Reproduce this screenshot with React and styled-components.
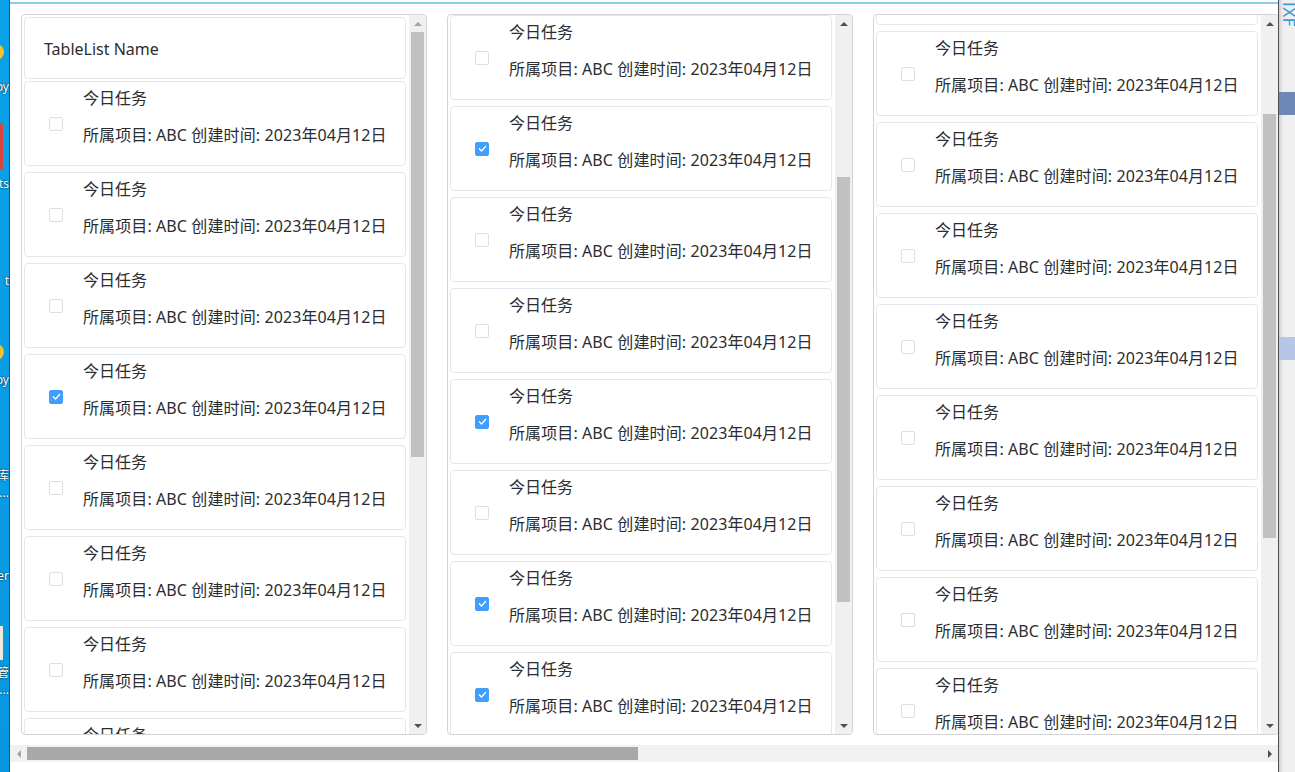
import React from "react";
import styled, { createGlobalStyle } from "styled-components";

const GlobalStyle = createGlobalStyle`
  html, body {
    margin: 0;
    padding: 0;
  }
  body {
    width: 1295px;
    height: 772px;
    overflow: hidden;
    background: #fff;
    font-family: "Noto Sans", "Noto Sans CJK SC", sans-serif;
    color: #2b2d30;
  }
`;

const Screen = styled.div`
  display: flex;
  width: 1295px;
  height: 772px;
`;

/* desktop peeking out on the left */
const Desktop = styled.div`
  position: relative;
  flex: none;
  width: 9px;
  background: linear-gradient(#0ba2ea, #0897df);
  border-right: 1px solid #17597c;
  overflow: hidden;
`;

const DeskLabel = styled.span`
  position: absolute;
  right: 0;
  top: ${(p) => p.top}px;
  color: #fff;
  font-size: 12px;
  line-height: 14px;
  white-space: nowrap;
  text-shadow: 0 0 2px #000;
`;

const DeskIcon = styled.span`
  position: absolute;
  left: ${(p) => p.left}px;
  top: ${(p) => p.top}px;
  width: ${(p) => p.w}px;
  height: ${(p) => p.h}px;
  background: ${(p) => p.color};
  border-radius: ${(p) => (p.round ? "50%" : "1px")};
`;

const Window = styled.div`
  flex: 1;
  display: flex;
  flex-direction: column;
  min-width: 0;
  background: #fff;
`;

const TopBar = styled.div`
  height: 2px;
  border-bottom: 2px solid #8ccdec;
`;

const Board = styled.div`
  flex: none;
  display: flex;
  gap: 20px;
  height: 721px;
  padding: 10px 0 10px 11px;
  overflow: hidden;
`;

const Column = styled.div`
  flex: none;
  display: flex;
  box-sizing: border-box;
  width: 406px;
  height: 721px;
  border: 1px solid #d3d3d3;
  border-radius: 4px;
  overflow: hidden;
`;

const Viewport = styled.div`
  flex: 1;
  min-width: 0;
  padding: 2px 3px 0 2px;
  overflow: hidden;
`;

const ListInner = styled.div`
  margin-top: ${(p) => -p.offset}px;
`;

const HeaderCard = styled.div`
  display: flex;
  align-items: center;
  box-sizing: border-box;
  height: 62px;
  margin-bottom: 2px;
  padding: 2px 0 0 19px;
  border: 1px solid #e4e7ed;
  border-radius: 4px;
  font-size: 16px;
`;

const Card = styled.div`
  display: flex;
  box-sizing: border-box;
  height: 85px;
  margin-bottom: 6px;
  padding-left: 24px;
  border: 1px solid #e4e7ed;
  border-radius: 4px;
`;

const Box = styled.span`
  align-self: center;
  flex: none;
  display: flex;
  align-items: center;
  justify-content: center;
  box-sizing: border-box;
  width: 14px;
  height: 14px;
  margin-right: 20px;
  border: 1px solid ${(p) => (p.checked ? "#409eff" : "#dcdfe6")};
  border-radius: 2px;
  background: ${(p) => (p.checked ? "#409eff" : "#fff")};
`;

const TextBlock = styled.div`
  padding: 5px 0 19px;
  font-size: 16px;
  line-height: 22px;
  white-space: nowrap;
`;

const Desc = styled.div`
  margin-top: 15px;
  letter-spacing: 0.1px;
`;

const VScroll = styled.div`
  flex: none;
  display: flex;
  flex-direction: column;
  width: 17px;
  background: #f0f0f0;
`;

const Arrow = styled.div`
  flex: none;
  display: flex;
  align-items: center;
  justify-content: center;
  width: 17px;
  height: 17px;
`;

const triBorders = {
  up: (c) => `border-left: 4px solid transparent; border-right: 4px solid transparent; border-bottom: 4px solid ${c};`,
  down: (c) => `border-left: 4px solid transparent; border-right: 4px solid transparent; border-top: 4px solid ${c};`,
  left: (c) => `border-top: 4px solid transparent; border-bottom: 4px solid transparent; border-right: 4px solid ${c};`,
  right: (c) => `border-top: 4px solid transparent; border-bottom: 4px solid transparent; border-left: 4px solid ${c};`,
};

const Tri = styled.span`
  width: 0;
  height: 0;
  ${(p) => triBorders[p.dir](p.color)}
`;

const Track = styled.div`
  flex: 1;
  display: flex;
  flex-direction: ${(p) => (p.horizontal ? "row" : "column")};
  min-height: 0;
`;

const Thumb = styled.div`
  flex: none;
  background: ${(p) => p.color || "#c1c1c1"};
  ${(p) =>
    p.horizontal
      ? `width: ${p.size}px; height: 13px; margin: 2px 0 0 ${p.start}px;`
      : `height: ${p.size}px; margin: ${p.start}px 2px 0;`}
`;

const HScroll = styled.div`
  flex: none;
  display: flex;
  height: 17px;
  background: #f1f1f1;
`;

const BottomGap = styled.div`
  flex: 1;
  background: #fff;
`;

/* another window behind, on the right */
const OtherWindow = styled.div`
  position: relative;
  flex: none;
  width: 16px;
  border-left: 1px solid #4f4f4f;
  background: linear-gradient(90deg, #cfcfcf, #efefef 4px, #f0f0f0);
  overflow: hidden;
`;

const Band = styled.div`
  position: absolute;
  left: 0;
  right: 0;
  top: ${(p) => p.top}px;
  height: ${(p) => p.h}px;
  background: ${(p) => p.color};
`;

const PeekText = styled.span`
  position: absolute;
  left: 1px;
  top: 2px;
  color: #3b9ad8;
  font-family: "DejaVu Sans", sans-serif;
  font-size: 16px;
  writing-mode: vertical-rl;
  line-height: 16px;
`;

function Check({ checked }) {
  return (
    <Box checked={checked}>
      {checked && (
        <svg width="9" height="7" viewBox="0 0 9 7">
          <polyline points="1,3.5 3.5,6 8,1" fill="none" stroke="#fff" strokeWidth="1.3" />
        </svg>
      )}
    </Box>
  );
}

function TaskCard({ checked }) {
  return (
    <Card>
      <Check checked={checked} />
      <TextBlock>
        <div>今日任务</div>
        <Desc>所属项目: ABC 创建时间: 2023年04月12日</Desc>
      </TextBlock>
    </Card>
  );
}

function ScrollBar({ start, size, upColor }) {
  return (
    <VScroll>
      <Arrow>
        <Tri dir="up" color={upColor} />
      </Arrow>
      <Track>
        <Thumb start={start} size={size} />
      </Track>
      <Arrow>
        <Tri dir="down" color="#505050" />
      </Arrow>
    </VScroll>
  );
}

const columns = [
  {
    header: true,
    offset: 0,
    checks: [false, false, false, true, false, false, false, false],
    thumb: { start: 0, size: 425, upColor: "#a3a3a3" },
  },
  {
    offset: 2,
    checks: [false, true, false, false, true, false, true, true],
    thumb: { start: 145, size: 425, upColor: "#505050" },
  },
  {
    offset: 77,
    checks: [false, false, false, false, false, false, false, false, false],
    thumb: { start: 82, size: 424, upColor: "#505050" },
  },
];

const deskLabels = [
  { top: 80, text: "Copy" },
  { top: 177, text: "ts" },
  { top: 274, text: "t" },
  { top: 373, text: "Copy" },
  { top: 469, text: "库" },
  { top: 486, text: "..." },
  { top: 569, text: "er" },
  { top: 666, text: "管" },
  { top: 683, text: "..." },
];

export default function App() {
  return (
    <>
      <GlobalStyle />
      <Screen>
        <Desktop>
          <DeskIcon left={-12} top={44} w={16} h={16} color="#f2c230" round />
          <DeskIcon left={-20} top={123} w={23} h={47} color="#d8453e" />
          <DeskIcon left={-12} top={344} w={16} h={16} color="#f2c230" round />
          <DeskIcon left={-20} top={626} w={23} h={34} color="#efe8dc" />
          {deskLabels.map((l, i) => (
            <DeskLabel key={i} top={l.top}>
              {l.text}
            </DeskLabel>
          ))}
        </Desktop>

        <Window>
          <TopBar />
          <Board>
            {columns.map((col, ci) => (
              <Column key={ci}>
                <Viewport>
                  <ListInner offset={col.offset}>
                    {col.header && <HeaderCard>TableList Name</HeaderCard>}
                    {col.checks.map((c, i) => (
                      <TaskCard key={i} checked={c} />
                    ))}
                  </ListInner>
                </Viewport>
                <ScrollBar {...col.thumb} />
              </Column>
            ))}
          </Board>
          <HScroll>
            <Arrow>
              <Tri dir="left" color="#a3a3a3" />
            </Arrow>
            <Track horizontal>
              <Thumb horizontal start={0} size={611} color="#a8a8a8" />
            </Track>
            <Arrow>
              <Tri dir="right" color="#505050" />
            </Arrow>
          </HScroll>
          <BottomGap />
        </Window>

        <OtherWindow>
          <PeekText>IXF</PeekText>
          <Band top={92} h={23} color="#6d88b7" />
          <Band top={337} h={23} color="#b5c6e6" />
        </OtherWindow>
      </Screen>
    </>
  );
}
